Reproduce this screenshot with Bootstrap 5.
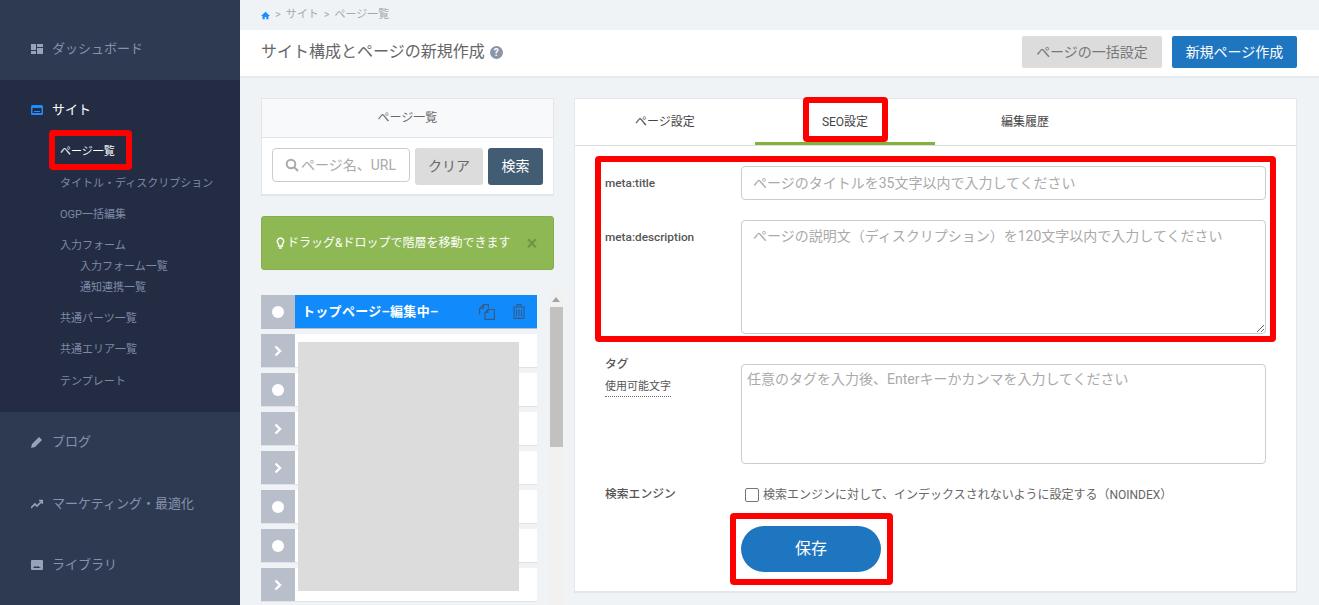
<!DOCTYPE html>
<html lang="ja">
<head>
<meta charset="utf-8">
<title>サイト構成</title>
<link rel="stylesheet" href="https://cdn.jsdelivr.net/npm/bootstrap@5.3.0/dist/css/bootstrap.min.css">
<style>
html,body{height:605px;overflow:hidden}
body{font-family:Roboto,"Noto Sans CJK JP",sans-serif;background:#eff3f6;color:#555;font-size:13px}
.shell{height:605px}
.side{width:240px;flex:none;background:#2e3a52;color:#8592ab}
.side-top{height:80px;padding:17px 0 0 31px;font-size:13px}
.side-cur{height:332px;background:#232c43;padding:21px 0 0 31px}
.side-btm{height:61px;padding-left:31px;font-size:13px}
.side-blog{padding-bottom:2px}
.side-ic{width:12px;height:12px;margin-right:9px;flex:none}
.cur-head{color:#fff;font-size:13px;height:18px;margin-bottom:25px}
.sub-link{font-size:11px;color:#7d8aa6;height:31px;line-height:16px;padding-left:29px}
.sub-on{color:#fff;height:32px}
.sub-form{height:21px}
.sub-last{height:32px}
.sub-deep{font-size:11px;color:#7d8aa6;height:21px;line-height:16px;padding-left:49px}
.sub-deep-end{height:31px}
.main{min-width:0}
.crumb{height:30px;font-size:11px;color:#a2a9b3;padding-left:21px;gap:5px}
.crumb svg{width:9px;height:9px}
.head-bar{height:48px;background:#fff;border-bottom:2px solid #e7eaed;padding:0 22px 2px 21px}
.head-title{font-size:16px;color:#666}
.help-dot{width:13px;height:13px;border-radius:50%;background:#8c95a6;color:#fff;font-size:10px;font-weight:700;line-height:13px;text-align:center;margin-left:5px}
.btn-all,.btn-new{height:32px;font-size:14px;border-radius:2px;padding:0;border:0}
.btn-all{width:140px;background:#dcdcdc;color:#777;margin-right:10px}
.btn-new{width:125px;background:#1f76c0;color:#fff}
.work{padding:20px 0 0 21px;gap:20px;min-height:0}
.left-col{width:293px;flex:none}
.find-card{height:98px;border:1px solid #e3e6ea;border-bottom-width:2px;border-radius:0;background:#fff}
.find-head{height:39px;background:#f8f9fb;border-bottom:1px solid #dfe2e6;font-size:12px;color:#666}
.find-body{padding:10px 10px 0 10px;gap:5px}
.find-box{width:138px;height:34px;flex:none;border:1px solid #ccc;border-radius:4px;padding-left:12px;color:#aaa;font-size:14px;white-space:nowrap;overflow:hidden}
.find-box svg{width:14px;height:14px;margin-right:2px;flex:none}
.btn-clear,.btn-find{height:37px;flex:none;border:0;border-radius:3px;padding:0;font-size:14px}
.btn-clear{width:68px;background:#dcdcdc;color:#666}
.btn-find{width:55px;background:#425c73;color:#fff}
.tip{height:54px;margin-top:20px;background:#8eb854;border:1px solid #88ad50;border-radius:3px;color:#fff;font-size:12px;padding:0 16px 0 14px}
.tip svg{width:9px;height:12px;margin-right:2px;flex:none}
.tip-x{color:#6f9647;font-size:20px;font-weight:700;line-height:1;margin-left:auto}
.tree-wrap{margin-top:20px;height:315px;width:303px}
.tree{width:276px;gap:5px;padding-top:5px}
.tree-row{height:34px;background:#fff;border-bottom:1px solid #dfe3e7;flex:none}
.tree-cur{background:#118bfb;border-bottom:1px solid #b6bdc9}
.tree-grip{width:34px;background:#b8bfca;flex:none}
.tree-name{color:#fff;font-size:13px;font-weight:700;padding:1px 0 0 7px;white-space:nowrap;letter-spacing:.3px}
.tree-acts{margin-left:auto;padding-right:12px;gap:18px}
.ic-copy{width:16px;height:16px}
.ic-trash{width:12px;height:15px}
.dot-w{width:12px;height:12px;border-radius:50%;background:#fff}
.chev{width:10px;height:12px}
.mask{position:absolute;left:37px;top:52px;width:221px;height:249px;background:#dcdcdc}
.sbar{position:absolute;left:287px;top:0;width:16px;height:315px;background:#f1f1f1}
.sthumb{position:absolute;left:2px;top:17px;width:13px;height:140px;background:#c1c1c1}
.sarrow{position:absolute;left:4px;top:7px;border:4px solid transparent;border-top:0;border-bottom:5px solid #a3a3a3}
.edit-card{width:723px;height:495px;flex:none;border:1px solid #e3e6ea;border-bottom-width:2px;background:#fff;border-radius:0}
.tab-row{height:47px;border-bottom:1px solid #dcdfe2;flex:none}
.tab-cell{width:180px;color:#444;font-size:12px;height:46px;padding-bottom:1px}
.tab-on{box-shadow:inset 0 -3px 0 #83b13c}
.form-zone{padding:20px 30px 0 30px}
.lab{width:136px;flex:none;font-size:11.8px;font-weight:500;color:#555}
.lab-title{padding-top:1px}
.lab-desc{padding-top:9px}
.lab-tag{margin-top:-8px}
.fld{flex:1;border:1px solid #ccc;border-radius:4px;color:#aaa;font-size:14px;padding:0 11px;background:#fff;box-shadow:none}
.fld::placeholder{color:#aaa}
.f-title{height:34px}
.f-desc{height:114px;padding-top:5px}
.f-tags{height:100px;padding:4px 5px 0;resize:none}
.row-a{margin-bottom:20px}
.row-b{margin-bottom:30px}
.row-c{margin-bottom:22px}
.row-d{margin-bottom:22px}
.lab-sub{display:inline-block;font-weight:400;font-size:11px;color:#555;border-bottom:1px dotted #667;padding-bottom:1px;margin-top:5px}
.noindex{font-size:12px;color:#666}
.noindex .chk{width:14px;height:14px;border:1px solid #767676;border-radius:2px;margin:0 4px 0 4px;flex:none;background:#fff}
.save-btn{width:140px;height:46px;border:0;border-radius:23px;background:#1f76c0;color:#fff;font-size:16px;padding:0;margin-left:136px}
.mark-box{position:absolute;border:6px solid #f00;border-radius:4px;pointer-events:none}
.mk-side{left:49px;top:130px;width:83px;height:40px}
.mk-tab{left:803px;top:97px;width:85px;height:45px}
.mk-form{left:595px;top:156px;width:681px;height:186px}
.mk-save{left:730px;top:513px;width:163px;height:72px}
</style>
</head>
<body>
<div class="shell d-flex position-relative">
  <aside class="side d-flex flex-column">
    <div class="side-top d-flex align-items-center">
      <svg class="side-ic" viewBox="0 0 12 12" fill="#97a3b8"><path d="M0 1h5v6H0zM6 1h6v3H6zM6 5h6v6H6zM0 8h5v3H0z"/></svg>ダッシュボード
    </div>
    <div class="side-cur">
      <div class="cur-head d-flex align-items-center">
        <svg class="side-ic" viewBox="0 0 12 12"><rect y="1" width="12" height="10" rx="1.5" fill="#1e8eff"/><rect x="1.5" y="4" width="9" height="5" fill="#232c43"/><rect x="3" y="7" width="6" height="1" fill="#1e8eff"/></svg>サイト
      </div>
      <div class="sub-link sub-on">ページ一覧</div>
      <div class="sub-link">タイトル・ディスクリプション</div>
      <div class="sub-link">OGP一括編集</div>
      <div class="sub-link sub-form">入力フォーム</div>
      <div class="sub-deep">入力フォーム一覧</div>
      <div class="sub-deep sub-deep-end">通知連携一覧</div>
      <div class="sub-link">共通パーツ一覧</div>
      <div class="sub-link sub-last">共通エリア一覧</div>
      <div class="sub-link">テンプレート</div>
    </div>
    <div class="side-btm side-blog d-flex align-items-center">
      <svg class="side-ic" viewBox="0 0 12 12" fill="#97a3b8"><path d="M0 12l1-4 7-7 3 3-7 7z"/></svg>ブログ
    </div>
    <div class="side-btm d-flex align-items-center">
      <svg class="side-ic" viewBox="0 0 12 12" fill="none" stroke="#97a3b8" stroke-width="1.6"><path d="M0 10l4-4 2 2 5-5M8 2.5h3.5V6"/></svg>マーケティング・最適化
    </div>
    <div class="side-btm d-flex align-items-center">
      <svg class="side-ic" viewBox="0 0 12 12"><rect y="1" width="12" height="10" rx="1" fill="#97a3b8"/><path d="M2 9l2-2 1.5 1 1-1L10 9z" fill="#2e3a52"/></svg>ライブラリ
    </div>
  </aside>
  <main class="main flex-grow-1 d-flex flex-column">
    <div class="crumb d-flex align-items-center">
      <svg viewBox="0 0 12 12" fill="#1e8eff"><path d="M6 1L0 6.500h2V11h3V8h2v3h3V6.500h2z"/></svg>
      <span>&gt;</span><span>サイト</span><span>&gt;</span><span>ページ一覧</span>
    </div>
    <div class="head-bar d-flex align-items-center">
      <span class="head-title">サイト構成とページの新規作成</span><span class="help-dot">?</span>
      <button type="button" class="btn btn-all ms-auto">ページの一括設定</button>
      <button type="button" class="btn btn-new">新規ページ作成</button>
    </div>
    <div class="work d-flex flex-grow-1">
      <div class="left-col">
        <div class="card find-card">
          <div class="find-head d-flex align-items-center justify-content-center">ページ一覧</div>
          <div class="find-body d-flex align-items-start">
            <div class="find-box d-flex align-items-center">
              <svg viewBox="0 0 14 14" fill="none" stroke="#aaa" stroke-width="2"><circle cx="6" cy="6" r="4.300"/><path d="M9 9l4 4"/></svg>ページ名、URL
            </div>
            <button type="button" class="btn btn-clear">クリア</button>
            <button type="button" class="btn btn-find">検索</button>
          </div>
        </div>
        <div class="tip d-flex align-items-center">
          <svg viewBox="0 0 9 12" fill="none" stroke="#fff" stroke-width="1.400"><path d="M4.500 1a3.300 3.300 0 0 0-2 5.800V9h4V6.800a3.300 3.300 0 0 0-2-5.800zM3 11h3"/></svg>
          <span>ドラッグ&amp;ドロップで階層を移動できます</span>
          <span class="tip-x">×</span>
        </div>
        <div class="tree-wrap position-relative">
          <div class="tree d-flex flex-column">
            <div class="tree-row tree-cur d-flex align-items-center">
              <div class="tree-grip h-100 d-flex align-items-center justify-content-center"><span class="dot-w"></span></div>
              <div class="tree-name">トップページ–編集中–</div>
              <div class="tree-acts d-flex align-items-center">
                <svg class="ic-copy" viewBox="0 0 16 16" fill="none" stroke="#355a86" stroke-width="1.200"><path d="M.6 10.500V4.500L4.500.6h4.900v4M4.500.6v3.900H.6M6 15.400V8.500L9 5.500h6.400v9.900zM9 5.500v3H6"/></svg>
                <svg class="ic-trash" viewBox="0 0 12 15" fill="none" stroke="#355a86" stroke-width="1.100"><path d="M0 3h12M4 3V.6h4V3M1 3v11.400h10V3M3.500 5.500v7M6 5.500v7M8.500 5.500v7"/></svg>
              </div>
            </div>
            <div class="tree-row d-flex"><div class="tree-grip d-flex align-items-center justify-content-center"><svg class="chev" viewBox="0 0 10 12" fill="none" stroke="#fff" stroke-width="2.400"><path d="M2.500 1.500L7 6l-4.500 4.500"/></svg></div></div>
            <div class="tree-row d-flex"><div class="tree-grip d-flex align-items-center justify-content-center"><span class="dot-w"></span></div></div>
            <div class="tree-row d-flex"><div class="tree-grip d-flex align-items-center justify-content-center"><svg class="chev" viewBox="0 0 10 12" fill="none" stroke="#fff" stroke-width="2.400"><path d="M2.500 1.500L7 6l-4.500 4.500"/></svg></div></div>
            <div class="tree-row d-flex"><div class="tree-grip d-flex align-items-center justify-content-center"><svg class="chev" viewBox="0 0 10 12" fill="none" stroke="#fff" stroke-width="2.400"><path d="M2.500 1.500L7 6l-4.500 4.500"/></svg></div></div>
            <div class="tree-row d-flex"><div class="tree-grip d-flex align-items-center justify-content-center"><span class="dot-w"></span></div></div>
            <div class="tree-row d-flex"><div class="tree-grip d-flex align-items-center justify-content-center"><span class="dot-w"></span></div></div>
            <div class="tree-row d-flex"><div class="tree-grip d-flex align-items-center justify-content-center"><svg class="chev" viewBox="0 0 10 12" fill="none" stroke="#fff" stroke-width="2.400"><path d="M2.500 1.500L7 6l-4.500 4.500"/></svg></div></div>
          </div>
          <div class="mask"></div>
          <div class="sbar"><div class="sarrow"></div><div class="sthumb"></div></div>
        </div>
      </div>
      <div class="card edit-card">
        <div class="tab-row d-flex">
          <div class="tab-cell d-flex align-items-center justify-content-center">ページ設定</div>
          <div class="tab-cell tab-on d-flex align-items-center justify-content-center">SEO設定</div>
          <div class="tab-cell d-flex align-items-center justify-content-center">編集履歴</div>
        </div>
        <div class="form-zone">
          <div class="d-flex align-items-center row-a">
            <div class="lab lab-title">meta:title</div>
            <input class="form-control fld f-title" placeholder="ページのタイトルを35文字以内で入力してください">
          </div>
          <div class="d-flex row-b">
            <div class="lab lab-desc">meta:description</div>
            <textarea class="form-control fld f-desc" placeholder="ページの説明文（ディスクリプション）を120文字以内で入力してください"></textarea>
          </div>
          <div class="d-flex row-c">
            <div class="lab lab-tag"><div>タグ</div><span class="lab-sub">使用可能文字</span></div>
            <textarea class="form-control fld f-tags" placeholder="任意のタグを入力後、Enterキーかカンマを入力してください"></textarea>
          </div>
          <div class="d-flex align-items-center row-d">
            <div class="lab">検索エンジン</div>
            <div class="noindex d-flex align-items-center"><span class="chk"></span>検索エンジンに対して、インデックスされないように設定する（NOINDEX）</div>
          </div>
          <button type="button" class="btn save-btn">保存</button>
        </div>
      </div>
    </div>
  </main>
  <div class="mark-box mk-side"></div>
  <div class="mark-box mk-tab"></div>
  <div class="mark-box mk-form"></div>
  <div class="mark-box mk-save"></div>
</div>
<script src="https://cdn.jsdelivr.net/npm/bootstrap@5.3.0/dist/js/bootstrap.bundle.min.js"></script>
</body>
</html>
